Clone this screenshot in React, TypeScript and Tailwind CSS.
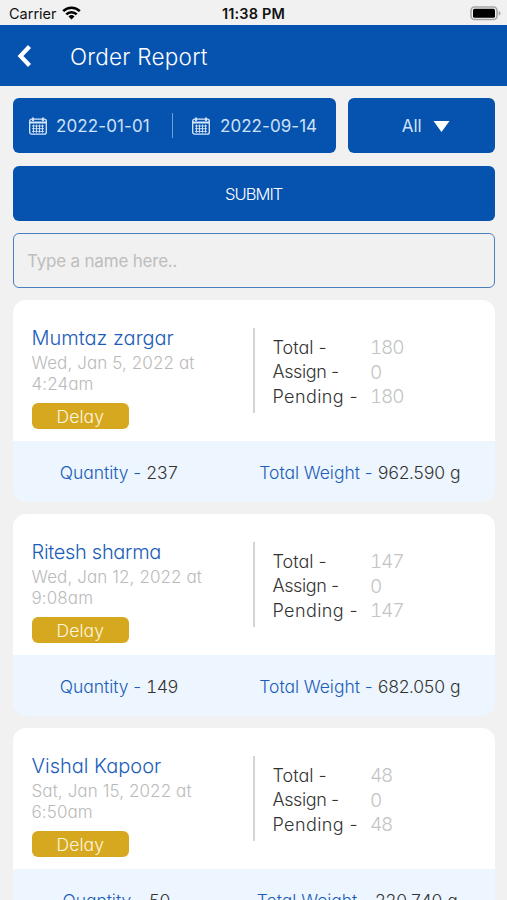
import type { ReactNode } from "react";

type Order = {
  name: string;
  nameTracking: string;
  date: string;
  time: string;
  total: string;
  assign: string;
  pending: string;
  quantity: string;
  weight: string;
};

const orders: Order[] = [
  { name: "Mumtaz zargar", nameTracking: "tracking-normal", date: "Wed, Jan 5, 2022 at", time: "4:24am", total: "180", assign: "0", pending: "180", quantity: "237", weight: "962.590 g" },
  { name: "Ritesh sharma", nameTracking: "tracking-[-0.3px]", date: "Wed, Jan 12, 2022 at", time: "9:08am", total: "147", assign: "0", pending: "147", quantity: "149", weight: "682.050 g" },
  { name: "Vishal Kapoor", nameTracking: "tracking-normal", date: "Sat, Jan 15, 2022 at", time: "6:50am", total: "48", assign: "0", pending: "48", quantity: "50", weight: "220.740 g" },
];

function CalendarIcon() {
  return (
    <svg width="18" height="18" viewBox="0 0 18 18" fill="none" stroke="#d9e8fa" className="shrink-0">
      <rect x="0.7" y="2.2" width="16.6" height="15" rx="2" strokeWidth="1.3" />
      <path d="M1 5.5h16" strokeWidth="2" />
      <path d="M4 0.5v3.5M14 0.5v3.5" strokeWidth="1.8" />
      <path d="M3 9h12M3 11.7h12M3 14.4h12M4.5 7.5v8.2M7.5 7.5v8.2M10.5 7.5v8.2M13.5 7.5v8.2" strokeWidth="0.9" />
    </svg>
  );
}

function StatusBar() {
  return (
    <div className="grid h-[25px] shrink-0 grid-cols-3 items-center pt-[3px] text-[14.5px] leading-none text-[#111]">
      <div className="flex items-center gap-1.5 pl-[9px]">
        <span>Carrier</span>
        <svg width="19" height="14" viewBox="0 0 19 14" fill="none" stroke="#000" strokeWidth="2.6" className="-ml-px -mt-[3px]">
          <path d="M1.2 5.2a11.8 11.8 0 0 1 16.6 0" />
          <path d="M4.3 8.4a7.3 7.3 0 0 1 10.4 0" />
          <path d="M9.5 13.6 6.5 10.5a4.3 4.3 0 0 1 6 0z" fill="#000" stroke="none" />
        </svg>
      </div>
      <div className="text-center font-semibold tracking-[0.15px]">11:38 PM</div>
      <div className="flex justify-end pr-[6px]">
        <svg width="31" height="15" viewBox="0 0 31 15" className="-mt-[2px]">
          <rect x="1" y="1" width="26" height="12.5" rx="3.6" fill="#f1f1f1" stroke="#a5a5a5" strokeWidth="1.6" />
          <rect x="3" y="2.8" width="22" height="9" rx="1.6" fill="#000" />
          <path d="M28.7 5c2.4.8 2.4 3.8 0 4.6z" fill="#a5a5a5" />
        </svg>
      </div>
    </div>
  );
}

function Stat({ label, value, tracking }: { label: string; value: string; tracking: string }) {
  return (
    <div className="flex h-[24.5px] items-center">
      <span className={`w-[97.5px] text-[18px] text-[#333] ${tracking}`}>{label} -</span>
      <span className="pt-[3px] text-[19px] font-light tabular-nums tracking-[-1.2px] text-[#c4c4c4]">{value}</span>
    </div>
  );
}

function Summary({ label, children }: { label: string; children: ReactNode }) {
  return (
    <div className="whitespace-pre text-[17.5px] text-[#333]">
      <span className="tracking-[-0.05px] text-[#1b5db9]">{label} - </span>
      <span className="tabular-nums tracking-[-0.8px] [word-spacing:1.5px]">{children}</span>
    </div>
  );
}

function OrderCard({ order }: { order: Order }) {
  return (
    <article className="h-[201.5px] shrink-0 overflow-hidden rounded-[13px] bg-[#edf5fe]">
      <div className="flex h-[140.5px] bg-white pl-[18.5px] pt-[27.5px]">
        <div className="w-[221px] shrink-0">
          <h2 className={`h-[25px] text-[20px] leading-[21px] text-[#1b5db9] ${order.nameTracking}`}>{order.name}</h2>
          <p className="whitespace-nowrap text-[17px] font-light leading-[21px] tracking-[0.1px] text-[#bababa]">
            {order.date}
            <br />
            {order.time}
          </p>
          <div className="mt-[8px] flex h-[26px] w-[97.5px] items-center justify-center rounded-[6px] bg-[#d6a81f] pt-[2px] text-[17.5px] tracking-[0.1px] text-[#fdf6df]">
            Delay
          </div>
        </div>
        <div className="h-[85px] border-l-2 border-[#d4d4d4] pl-[18px] pt-[7px]">
          <Stat label="Total" value={order.total} tracking="tracking-normal" />
          <Stat label="Assign" value={order.assign} tracking="tracking-[-0.4px]" />
          <Stat label="Pending" value={order.pending} tracking="tracking-[0.4px]" />
        </div>
      </div>
      <div className="ml-[6px] -mr-[6px] flex h-[61px] items-center justify-around pt-[4px]">
        <Summary label="Quantity">{order.quantity}</Summary>
        <Summary label="Total Weight">{order.weight}</Summary>
      </div>
    </article>
  );
}

export default function App() {
  return (
    <div className="flex h-[900px] w-[507px] flex-col overflow-hidden bg-[#f1f1f1] font-['Inter',sans-serif]">
      <StatusBar />
      <header className="flex h-[61.25px] shrink-0 items-center bg-[#0552af] pl-[17px] font-light text-white [font-feature-settings:'cv11'_1]">
        <svg width="15" height="22" viewBox="0 0 15 22" fill="none" stroke="#fff" strokeWidth="4.2">
          <path d="M12.5 1.5 3.5 11 12.5 20.5" />
        </svg>
        <h1 className="ml-[38px] pt-[3px] text-[22.5px] leading-none tracking-[0.25px]">Order Report</h1>
      </header>
      <main className="flex flex-col gap-[12.5px] px-[13px] pr-[12.5px] pt-[12px]">
        <div className="flex h-[55px] shrink-0 gap-[12px] text-[17px] text-[#cfe1f7]">
          <div className="flex w-[323px] items-center rounded-[6px] bg-[#0552af] pl-4">
            <CalendarIcon />
            <span className="ml-[9px] w-[107px] pt-[2px] tracking-[0.1px]">2022-01-01</span>
            <span className="ml-[9px] h-[25px] w-px bg-[#6f9ed6]" />
            <span className="ml-[19px] flex"><CalendarIcon /></span>
            <span className="ml-[10px] pt-[2px] tracking-[0.05px]">2022-09-14</span>
          </div>
          <div className="flex flex-1 items-center justify-center gap-[11px] rounded-[6px] bg-[#0552af] pl-[9px]">
            <span className="pt-[2px]">All</span>
            <svg width="17" height="11" viewBox="0 0 17 11" className="mt-0.5"><path d="M.5 0h16l-8 11z" fill="#fff" /></svg>
          </div>
        </div>
        <button className="h-[55px] shrink-0 rounded-[6px] bg-[#0552af] pt-[2px] text-[16.5px] font-light tracking-[-0.95px] text-white">SUBMIT</button>
        <input
          className="h-[55px] shrink-0 rounded-[6px] border-[1.5px] border-[#4a7fc2] bg-[#f1f1f1] px-[13px] text-[17px] tracking-[-0.2px] placeholder:text-[#bdbdbd]"
          placeholder="Type a name here.."
        />
        <section className="-mt-[0.5px] flex flex-col gap-[12.5px] font-light [font-feature-settings:'cv11'_1]">
          {orders.map((order) => (
            <OrderCard key={order.name} order={order} />
          ))}
        </section>
      </main>
    </div>
  );
}
